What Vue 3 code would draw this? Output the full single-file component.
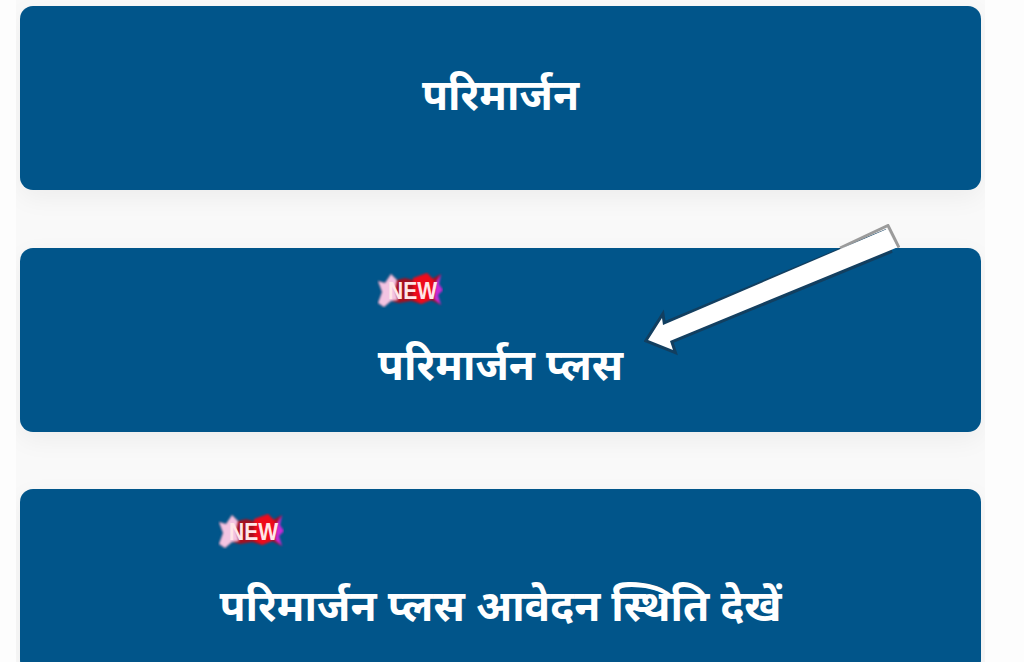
<script setup>
const items = [
  { label: 'परिमार्जन', isNew: false },
  { label: 'परिमार्जन प्लस', isNew: true, arrow: true },
  { label: 'परिमार्जन प्लस आवेदन स्थिति देखें', isNew: true }
]
</script>

<template>
  <main class="page">
    <section class="panel">
      <a v-for="item in items" :key="item.label" class="card">
        <span class="inner" :class="{ plain: !item.isNew }">
          <svg v-if="item.isNew" class="badge" viewBox="0 0 66 36" role="img" aria-label="NEW">
            <g class="badge-art">
              <path d="M1 9 L8 11 L14 2 L20 8 L28 6 L36 8 L44 4 L50 1 L55 7 L64 2 L61 12 L66 18 L60 23 L64 33 L54 28 L44 32 L34 29 L22 31 L14 29 L7 35 L1 31 L5 20 Z" fill="#a5101f"/>
              <path d="M36 6 L50 1 L57 8 L59 20 L54 28 L44 32 L36 27 Z" fill="#ee0a1a"/>
              <path d="M1 9 L8 11 L14 2 L20 8 L18 17 L21 28 L14 29 L7 35 L1 31 L5 20 Z" fill="#f3c4e2"/>
              <path d="M59 10 L64 2 L62 12 L66 18 L61 23 L64 33 L57 27 Z" fill="#c62bd8"/>
            </g>
            <text x="11" y="27" textLength="49" lengthAdjust="spacingAndGlyphs" class="badge-text">NEW</text>
          </svg>
          <span class="label">{{ item.label }}</span>
        </span>
        <svg v-if="item.arrow" class="arrow" viewBox="0 0 256 136">
          <path d="M4 116 L18 94 L19 101 L240 9 L245 27 L26 117 L29 126 Z" fill="#fff" stroke="#123f60" stroke-width="6" stroke-linejoin="miter"/>
          <path d="M196 24 L244 1.500 L255 23.500" fill="none" stroke="#9b9b9b" stroke-width="3"/>
          <path d="M4 116 L18 94 L19 101 L243 5 L253 23.500 L26 117 L29 126 Z" fill="#fff"/>
        </svg>
      </a>
    </section>
  </main>
</template>

<style>
html, body { margin: 0; background: #fdfdfd; }
</style>

<style scoped>
.page {
  height: 662px;
  overflow: hidden;
  padding: 0 16px;
  box-sizing: border-box;
}
.panel {
  width: 969px;
  height: 662px;
  box-sizing: border-box;
  padding: 6px 4px 0;
  background: #f9f9f9;
  display: flex;
  flex-direction: column;
  gap: 57.5px;
  overflow: hidden;
}
.card {
  position: relative;
  flex: 0 0 184px;
  background: #01558a;
  border-radius: 13px;
  display: flex;
  align-items: flex-start;
  justify-content: center;
  box-shadow: 0 8px 26px rgba(0, 0, 0, 0.05);
}
.inner {
  display: flex;
  flex-direction: column;
  align-items: flex-start;
  gap: 37px;
  padding-top: 24px;
}
.inner.plain {
  padding-top: 69px;
}
.badge {
  width: 66px;
  height: 36px;
  display: block;
  margin-left: -1px;
}
.badge-art {
  filter: blur(1px);
}
.badge-text {
  font: 700 24px "Liberation Sans", sans-serif;
  fill: #ffe6e8;
}
.label {
  font-family: "Noto Sans Devanagari", "Noto Sans", "Lohit Devanagari", "DejaVu Sans", sans-serif;
  font-size: 42.5px;
  font-weight: 700;
  line-height: 50px;
  color: #fff;
  white-space: nowrap;
}
.arrow {
  position: absolute;
  left: 624px;
  top: -24px;
  width: 256px;
  height: 136px;
}
</style>
